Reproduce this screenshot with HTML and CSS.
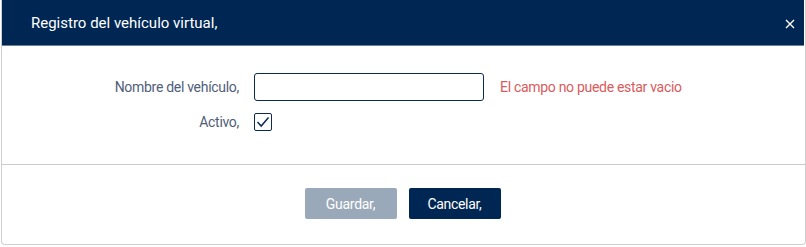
FILE: index.html
```html
<!DOCTYPE html>
<html lang="es">
<head>
<meta charset="utf-8">
<title>Registro del vehículo virtual</title>
<link rel="stylesheet" href="styles.css">
</head>
<body>
<div class="modal">
  <div class="modal-header">
    <span class="modal-title">Registro del vehículo virtual,</span>
    <span class="close">
      <svg width="10" height="10" viewBox="0 0 10 10"><path d="M1 1 L9 9 M9 1 L1 9" stroke="#ffffff" stroke-width="1.4" fill="none"/></svg>
    </span>
  </div>
  <div class="modal-body">
    <div class="row">
      <label class="label">Nombre del vehículo,</label>
      <input class="input" type="text">
      <span class="error">El campo no puede estar vacio</span>
    </div>
    <div class="row row-check">
      <label class="label">Activo,</label>
      <span class="checkbox">
        <svg width="14" height="12" viewBox="0 0 14 12"><path d="M1.5 6 L5.2 10 L12.5 1.5" stroke="#0c2a52" stroke-width="1.5" fill="none"/></svg>
      </span>
    </div>
  </div>
  <div class="modal-footer">
    <button class="btn btn-disabled">Guardar,</button>
    <button class="btn btn-primary">Cancelar,</button>
  </div>
</div>
</body>
</html>
```
FILE: styles.css
```css
html, body {
  margin: 0;
  padding: 0;
  background: #ffffff;
}
body {
  font-family: Roboto, "Liberation Sans", sans-serif;
  width: 806px;
  height: 247px;
  overflow: hidden;
}
.modal {
  box-sizing: border-box;
  width: 805px;
  height: 245px;
  margin-left: 1px;
  border: 1px solid #cfcfcf;
  border-top: none;
  border-radius: 0 0 4px 4px;
  display: flex;
  flex-direction: column;
}
.modal-header {
  height: 45px;
  background: #002753;
  border-bottom: 1px solid #6d7f98;
  display: flex;
  align-items: center;
  justify-content: space-between;
  padding: 0 9px 0 29px;
  flex-shrink: 0;
  margin-right: 1px;
}
.modal-title {
  color: #ffffff;
  font-size: 15px;
  padding-top: 1px;
}
.close {
  display: flex;
  align-items: center;
  padding-top: 2px;
}
.modal-body {
  height: 119px;
  border-bottom: 1px solid #cccccc;
  box-sizing: border-box;
  padding-top: 27px;
  display: flex;
  flex-direction: column;
  gap: 12px;
  flex-shrink: 0;
}
.row {
  display: flex;
  align-items: center;
}
.label {
  width: 252px;
  text-align: right;
  padding-right: 15px;
  box-sizing: border-box;
  color: #4f5e7a;
  font-size: 14px;
  letter-spacing: -0.3px;
}
.input {
  box-sizing: border-box;
  width: 230px;
  height: 28px;
  border: 1px solid #0c2a52;
  border-radius: 3px;
  outline: none;
  padding: 0 6px;
  margin: 0;
}
.error {
  margin-left: 16px;
  color: #d95b5c;
  font-size: 14px;
  letter-spacing: -0.3px;
}
.checkbox {
  box-sizing: border-box;
  width: 18px;
  height: 18px;
  border: 1px solid #0c2a52;
  border-radius: 2px;
  display: flex;
  align-items: center;
  justify-content: center;
}
.modal-footer {
  flex: 1;
  display: flex;
  justify-content: center;
  align-items: flex-start;
  padding-top: 23px;
  gap: 12px;
  padding-right: 2px;
}
.btn {
  height: 31px;
  width: 92px;
  border: none;
  border-radius: 2px;
  color: #ffffff;
  font-family: Roboto, "Liberation Sans", sans-serif;
  font-size: 14px;
  letter-spacing: -0.3px;
  padding: 0;
}
.btn-disabled {
  background: #9aa9b9;
}
.btn-primary {
  background: #002753;
}
```
